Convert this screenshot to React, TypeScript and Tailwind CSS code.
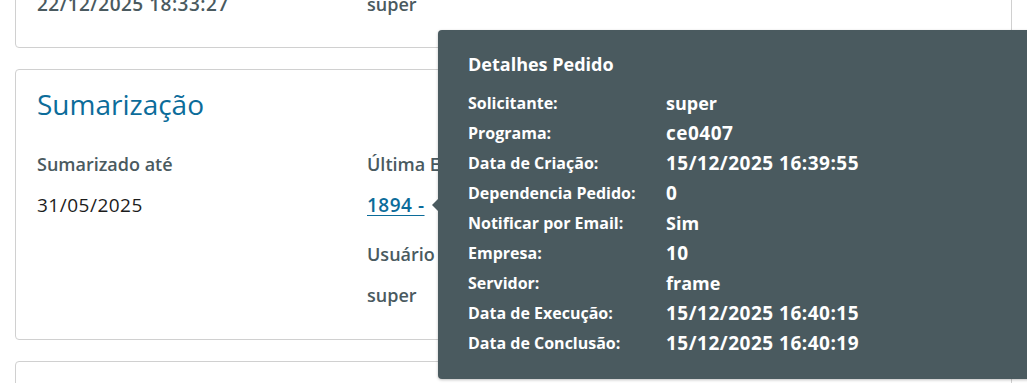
const detalhes = [
  { label: "Solicitante:", value: "super" },
  { label: "Programa:", value: "ce0407" },
  { label: "Data de Criação:", value: "15/12/2025 16:39:55" },
  { label: "Dependencia Pedido:", value: "0" },
  { label: "Notificar por Email:", value: "Sim" },
  { label: "Empresa:", value: "10" },
  { label: "Servidor:", value: "frame" },
  { label: "Data de Execução:", value: "15/12/2025 16:40:15" },
  { label: "Data de Conclusão:", value: "15/12/2025 16:40:19" },
];

const App = () => {
  return (
    <div
      className="relative h-[383px] w-[1027px] overflow-hidden bg-white"
      style={{ fontFamily: '"Open Sans", "Noto Sans", sans-serif' }}
    >
      <div className="flex flex-col gap-[21px] px-[15px]">
        {/* Execução anterior (cortada no topo) */}
        <div className="-mt-[52px] flex h-[100px] flex-col justify-end rounded-[4px] border border-[#d0d0d0] px-[21px] pb-[31px]">
          <div className="grid grid-cols-[330px_1fr] font-semibold leading-[24px] text-[#4a5a5f]">
            <span className="text-[19px] tracking-[0.5px]">22/12/2025 18:33:27</span>
            <span className="text-[18px]">super</span>
          </div>
        </div>

        {/* Sumarização */}
        <div className="rounded-[4px] border border-[#d0d0d0] px-[21px] pt-[19px] pb-[32px]">
          <h2 className="text-[28px] leading-[30px] font-normal text-[#0c6c9a]">Sumarização</h2>
          <div className="mt-[33px] grid grid-cols-[330px_1fr] text-[18px] leading-[24px]">
            <div className="flex flex-col gap-[17px]">
              <span className="font-semibold text-[#4a5a5f]">Sumarizado até</span>
              <span className="text-[19px] tracking-[0.5px] text-[#1c1c1c]">31/05/2025</span>
            </div>
            <div className="flex flex-col">
              <span className="font-semibold text-[#4a5a5f]">Última Execução</span>
              <a
                href="#"
                className="mt-[17px] self-start text-[19px] font-semibold tracking-[0.5px] text-[#0c6c9a] underline underline-offset-[3px]"
              >
                1894 -
              </a>
              <span className="mt-[25px] font-semibold text-[#4a5a5f]">Usuário</span>
              <span className="mt-[17px] font-semibold text-[#4a5a5f]">super</span>
            </div>
          </div>
        </div>

        {/* Próximo card */}
        <div className="h-[80px] rounded-[4px] border border-[#d0d0d0]" />
      </div>

      {/* Tooltip detalhes */}
      <div className="absolute left-[438px] top-[30px] w-[620px] rounded-[4px] bg-[#4a5a5f] pl-[30px] pt-[22px] pb-[21px] text-white shadow-[0_1px_3px_rgba(0,0,0,0.25)]">
        <span className="absolute -left-[6px] top-[169px] h-0 w-0 border-y-[6px] border-r-[6px] border-y-transparent border-r-[#4a5a5f]" />
        <h3 className="text-[18px] font-bold leading-[24px]">Detalhes Pedido</h3>
        <div className="mt-[12px] flex flex-col">
          {detalhes.map((d) => (
            <div key={d.label} className="flex h-[30px] items-center">
              <span className="w-[198px] text-[16px] font-bold">{d.label}</span>
              <span className={/\d/.test(d.value) ? "text-[19px] font-bold tracking-[0.5px]" : "text-[18px] font-bold"}>
                {d.value}
              </span>
            </div>
          ))}
        </div>
      </div>
    </div>
  );
};

export default App;
